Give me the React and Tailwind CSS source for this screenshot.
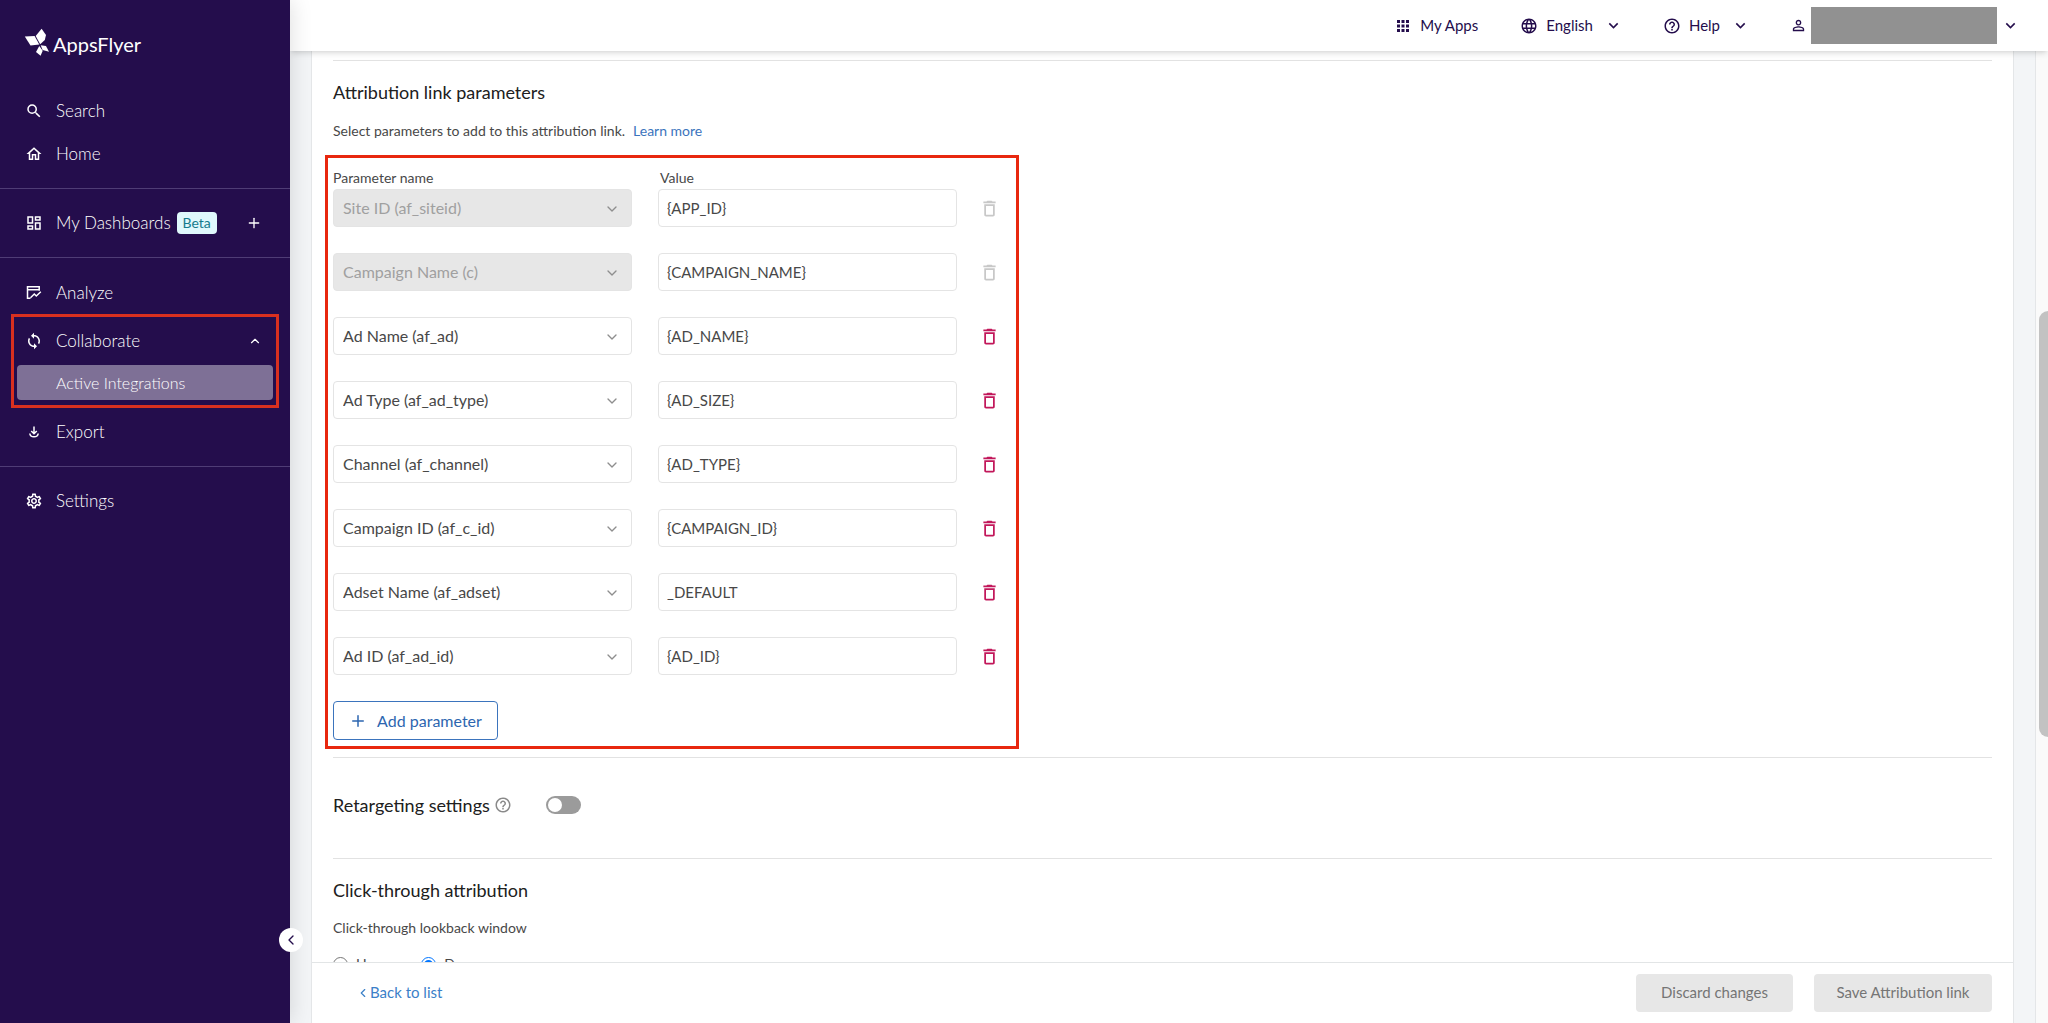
import {
    MdApps,
    MdDeleteOutline,
    MdExpandMore,
    MdHelpOutline,
    MdLanguage,
    MdOutlineDashboard,
    MdOutlineHome,
    MdOutlineSettings,
    MdPersonOutline,
    MdSearch,
    MdSync,
} from 'react-icons/md'
import { ChevronDown, ChevronLeft, ChevronUp, Plus } from 'lucide-react'

const parameters = [
    { name: 'Site ID (af_siteid)', value: '{APP_ID}', locked: true },
    { name: 'Campaign Name (c)', value: '{CAMPAIGN_NAME}', locked: true },
    { name: 'Ad Name (af_ad)', value: '{AD_NAME}' },
    { name: 'Ad Type (af_ad_type)', value: '{AD_SIZE}' },
    { name: 'Channel (af_channel)', value: '{AD_TYPE}' },
    { name: 'Campaign ID (af_c_id)', value: '{CAMPAIGN_ID}' },
    { name: 'Adset Name (af_adset)', value: '_DEFAULT' },
    { name: 'Ad ID (af_ad_id)', value: '{AD_ID}' },
]

function Logo(){
    return(
        <a href="#" aria-label="AppsFlyer" className="block ml-6 mt-7 w-[118px] h-[32px]">
            <svg viewBox="0 0 118 32" className="w-full h-full" fill="none">
                <g fill="#fff">
                    <path d="M0.8 8.6 L10.6 8 L15.3 16.6 L6.5 17.6 Z" />
                    <path d="M17.6 0.8 L22 7 L20.8 12 L16.2 16.2 L11.7 8 Z" />
                    <path d="M16.7 17.2 L22 18 L25 23.7 L18.6 22 Z" />
                    <path d="M15.3 18 L18.7 22.7 L16.6 27.7 L12 24 Z" />
                </g>
                <text x="29" y="24" fill="#fff" fontSize="20" fontWeight="400" fontFamily="Lato, sans-serif">AppsFlyer</text>
            </svg>
        </a>
    )
}

function AnalyzeIcon(){
    return(
        <svg viewBox="0 0 16 16" className="w-4 h-4" fill="none" stroke="currentColor" strokeWidth="1.5">
            <path d="M4.5 13.2 H1.5 V1.7 H13.2 V5.8 M1.5 4.8 H13.2" />
            <path d="M4.5 12.8 L8.3 9 L10.3 11 L14.8 6.8" />
        </svg>
    )
}

function ExportIcon(){
    return(
        <svg viewBox="0 0 16 16" className="w-4 h-4" fill="none" stroke="currentColor" strokeWidth="1.5">
            <path d="M8 2.5 V9.5 M5.2 7 L8 9.8 L10.8 7" />
            <path d="M3.8 9.5 C4.2 13.8 11.8 13.8 12.2 9.5" />
        </svg>
    )
}

function NavItem({ icon, label, children }){
    return(
        <div className="h-9 pl-[26px] pr-7 flex items-center text-white">
            <a href="#" className="flex items-center gap-[14px]">
                <span className="w-4 h-4 flex items-center justify-center [&>svg]:shrink-0">{icon}</span>
                {label}
            </a>
            {children}
        </div>
    )
}

function Sidebar(){
    return(
        <aside className="relative z-20 w-[290px] shrink-0 bg-[#240d4c] text-[17px] font-light shadow-[2px_0_20px_rgba(0,0,0,0.12)]">
            <Logo />
            <nav className="mt-[33px]">
                <NavItem icon={<MdSearch size={18} />} label="Search" />
                <div className="mt-[7px] pb-4 border-b border-[#4f3c75]">
                    <NavItem icon={<MdOutlineHome size={18} />} label="Home" />
                </div>
                <div className="py-4 border-b border-[#4f3c75]">
                    <NavItem icon={<MdOutlineDashboard size={18} />} label="My Dashboards">
                        <span className="ml-[6px] w-10 h-[22px] flex items-center justify-center rounded bg-[#e0f8fc] text-[#157a8c] text-sm font-normal">Beta</span>
                        <button type="button" aria-label="Add dashboard" className="ml-auto"><Plus size={16} strokeWidth={2} /></button>
                    </NavItem>
                </div>
                <div className="pt-[17px] pb-4 border-b border-[#4f3c75]">
                    <NavItem icon={<AnalyzeIcon />} label="Analyze" />
                    <div className="mx-[11px] mt-[3px] h-[94px] border-3 border-[#d9301f]">
                        <div className="h-[47px] pl-3 pr-[14px] flex items-center text-white">
                            <a href="#" className="flex items-center gap-[14px]">
                                <span className="w-4 h-4 flex items-center justify-center [&>svg]:shrink-0"><MdSync size={18} /></span>
                                Collaborate
                            </a>
                            <button type="button" aria-label="Collapse section" className="ml-auto"><ChevronUp size={14} strokeWidth={2} /></button>
                        </div>
                        <a href="#" className="mx-[3px] mt-px h-[35px] pl-[39px] flex items-center rounded bg-[#7e7096] text-white text-base">Active Integrations</a>
                    </div>
                    <div className="mt-[6px]">
                        <NavItem icon={<ExportIcon />} label="Export" />
                    </div>
                </div>
                <div className="py-4">
                    <NavItem icon={<MdOutlineSettings size={18} />} label="Settings" />
                </div>
            </nav>
            <button type="button" aria-label="Collapse menu" className="absolute -right-[13px] bottom-[71px] w-6 h-6 rounded-full bg-white text-[#240d4c] flex items-center justify-center">
                <ChevronLeft size={16} strokeWidth={2} />
            </button>
        </aside>
    )
}

function Header(){
    return(
        <header className="relative z-10 h-[51px] shrink-0 bg-white shadow-md flex items-center justify-end pr-7 text-[15px] text-[#240d4c]">
            <a href="#" className="flex items-center gap-2"><MdApps size={18} />My Apps</a>
            <button type="button" className="ml-[42px] flex items-center">
                <MdLanguage size={18} /><span className="ml-2 mr-[11px]">English</span><MdExpandMore size={19} />
            </button>
            <button type="button" className="ml-10 flex items-center">
                <MdHelpOutline size={18} /><span className="ml-2 mr-[11px]">Help</span><MdExpandMore size={19} />
            </button>
            <button type="button" aria-label="Account" className="ml-10 flex items-center">
                <MdPersonOutline size={17} /><span className="ml-1 mr-1 w-[186px] h-[37px] bg-[#919191]" /><MdExpandMore size={19} />
            </button>
        </header>
    )
}

function ParameterRow({ name, value, locked }){
    return(
        <div className="flex items-center">
            <div className="relative">
                <select
                    aria-label="Parameter name"
                    defaultValue={name}
                    disabled={locked}
                    className="w-[299px] h-[38px] px-[9px] appearance-none rounded border border-[#e4e4e4] bg-white text-base text-[#484848] opacity-100 disabled:bg-[#e7e7e7] disabled:text-[#a0a0a0]"
                >
                    <option>{name}</option>
                </select>
                <ChevronDown size={16} strokeWidth={2} className="absolute right-3 top-3 text-[#8e8e8e] pointer-events-none" />
            </div>
            <input type="text" aria-label="Value" defaultValue={value} className="ml-[26px] w-[299px] h-[38px] px-2 rounded border border-[#e4e4e4] text-[15px] text-[#484848]" />
            <button type="button" aria-label="Delete parameter" disabled={locked} className="ml-[22px] text-[#c2185b] disabled:text-[#c8c8c8]">
                <MdDeleteOutline size={21} />
            </button>
        </div>
    )
}

function App(){
    return(
        <div className="h-screen overflow-hidden flex bg-[#f3f5f7] font-['Lato',sans-serif]">
            <Sidebar />
            <div className="flex-1 min-w-0 flex flex-col">
                <Header />
                <div className="flex-1 min-h-0 flex">
                    <main className="ml-[21px] flex-1 min-w-0 flex flex-col bg-white border-x border-[#e4e6e8] text-sm text-[#484848]">
                        <div className="flex-1 min-h-0 overflow-hidden px-[21px] pt-[9px]">
                            <section className="border-t border-[#e2e2e2] pt-[19px]">
                                <h2 className="h-6 leading-6 text-lg text-[#202020]">Attribution link parameters</h2>
                                <p className="mt-[17px] h-5 leading-5">
                                    Select parameters to add to this attribution link.
                                    <a href="#" className="ml-2 text-[#3b74bd]">Learn more</a>
                                </p>
                                <div className="-ml-2 mt-[14px] w-[694px] h-[594px] border-3 border-[#e8270f] pl-[5px] pt-[10px]">
                                    <div className="flex h-[21px] leading-5">
                                        <span className="w-[327px]">Parameter name</span>
                                        <span>Value</span>
                                    </div>
                                    <div className="flex flex-col gap-[26px]">
                                        {parameters.map((p) => <ParameterRow key={p.name} {...p} />)}
                                        <button type="button" className="w-[165px] h-[39px] flex items-center justify-center gap-[10px] rounded border border-[#3b74bd] text-base text-[#2d66b0]">
                                            <Plus size={18} strokeWidth={2} />Add parameter
                                        </button>
                                    </div>
                                </div>
                            </section>
                            <section className="mt-2 h-[102px] pb-[7px] border-y border-[#e2e2e2] flex items-center text-[#202020]">
                                <label htmlFor="retargeting" className="text-lg">Retargeting settings</label>
                                <MdHelpOutline size={18} className="ml-1 text-[#8a8a8a]" />
                                <input id="retargeting" type="checkbox" role="switch" className="ml-[34px] w-[35px] h-[18px] appearance-none rounded-full bg-[#9b9b9b] p-[2px] before:block before:w-[14px] before:h-[14px] before:rounded-full before:bg-white checked:before:ml-auto" />
                            </section>
                            <section className="pt-[19px]">
                                <h2 className="h-6 leading-6 text-lg text-[#202020]">Click-through attribution</h2>
                                <p className="mt-4 h-5 leading-5">Click-through lookback window</p>
                                <div className="mt-4 flex items-center gap-7">
                                    <label className="flex items-center gap-2"><input type="radio" name="window" className="w-[15px] h-[15px]" />Hours</label>
                                    <label className="flex items-center gap-2"><input type="radio" name="window" defaultChecked className="w-[15px] h-[15px]" />Days</label>
                                </div>
                            </section>
                        </div>
                        <footer className="h-[61px] shrink-0 border-t border-[#e2e5e6] pl-11 pr-[21px] flex items-center text-[15px]">
                            <a href="#" className="flex items-center text-[#3b80c8]"><ChevronLeft size={14} strokeWidth={2} />Back to list</a>
                            <button type="button" disabled className="ml-auto w-[157px] h-[38px] rounded bg-[#e7e7e7] text-[#757575]">Discard changes</button>
                            <button type="button" disabled className="ml-[21px] w-[178px] h-[38px] rounded bg-[#e7e7e7] text-[#757575]">Save Attribution link</button>
                        </footer>
                    </main>
                    <div className="ml-[21px] w-[13px] border-l border-[#e4e6e8] bg-[#fafafa] pl-[3px] pt-[260px]">
                        <div className="h-[426px] rounded-l-full bg-[#c2c2c2]" />
                    </div>
                </div>
            </div>
        </div>
    )
}

export default App
